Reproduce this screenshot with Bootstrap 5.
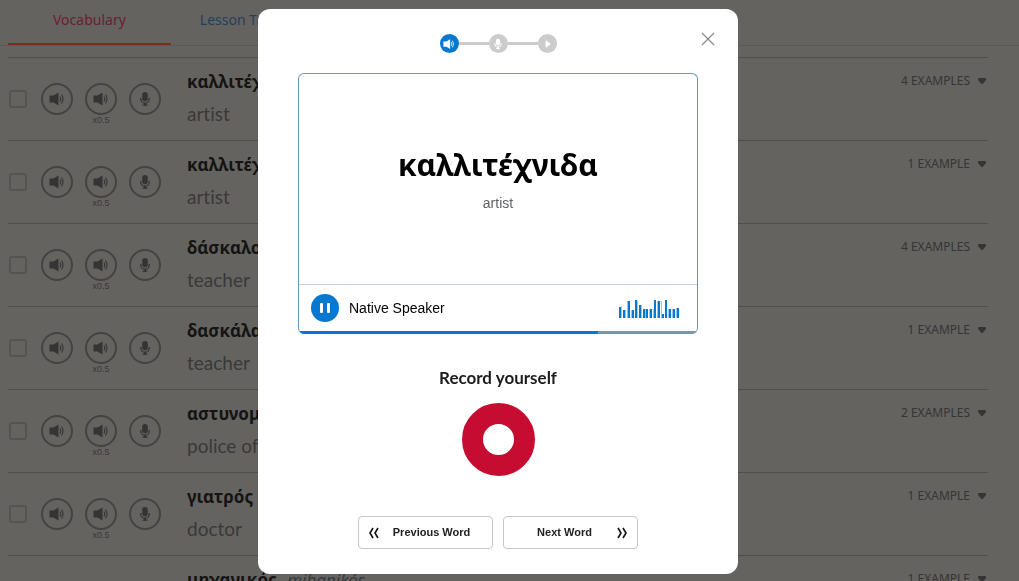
<!DOCTYPE html>
<html lang="en">
<head>
<meta charset="utf-8">
<meta name="viewport" content="width=device-width, initial-scale=1">
<title>Vocabulary</title>
<link href="https://cdn.jsdelivr.net/npm/bootstrap@5.3.0/dist/css/bootstrap.min.css" rel="stylesheet">
<style>
  body { background: #656360; font-family: "Lato", "Noto Sans", sans-serif; color: #3a3839; font-variant-ligatures: none; }
  .arial { font-family: "Liberation Sans", Arial, sans-serif; }

  /* lesson tabs */
  .lesson-tabs { height: 46px; border-bottom: 1px solid #5b5957; font: 14px/20px "Noto Sans", sans-serif; }
  .lesson-tabs .nav-link { height: 45px; padding: 10px 29px; color: #22405c; border-bottom: 2px solid transparent; border-radius: 0; }
  .lesson-tabs .nav-link.active { padding: 10px 45px; color: #6b1f2c; border-color: #7a2f1b; }

  /* word list */
  .word-list { margin: 11px 31px 0 8px; }
  .word-row { height: 83px; border-top: 1px solid #514f4d; }
  .pick { width: 18px; height: 18px; margin: 32px 14px 0 1px; appearance: none; border: 2px solid #565452; border-radius: 3px; background: none; }
  .tools { gap: 12px; margin: 25px 26px 0 0; }
  .tool { width: 32px; height: 32px; border: 2px solid #454342; border-radius: 50%; background: none; color: #353334; }
  .tool svg { width: 16px; height: 16px; }
  .slow { font-size: 9px; line-height: 10px; }
  .word { margin-top: 12px; font: 700 17px/24px "Noto Sans", sans-serif; color: #151414; white-space: nowrap; }
  .word i { margin-left: 6px; font-weight: 400; color: #35383d; }
  .gloss { margin-top: 8px; font-size: 19px; line-height: 24px; }
  .examples { margin-top: 15px; padding: 0 2px 0 0; gap: 8px; border: 0; background: none; color: #363435; font: 12px/16px "Noto Sans", sans-serif; }

  /* study dialog */
  .study { padding-right: 23px; }
  .study .modal-dialog { max-width: 480px; margin: 9px auto; }
  .study .modal-content { border: 0; border-radius: 12px; padding: 25px 40px; color: #000; }
  .step { width: 19px; height: 19px; border-radius: 50%; background: #ccc; color: #fff; }
  .step.current { background: #0678d0; }
  .step svg { width: 12px; height: 12px; }
  .link-line { width: 30px; height: 3px; background: #ccc; }
  .close-btn { position: absolute; top: 22px; right: 22px; padding: 0; border: 0; background: none; color: #8b8b8b; }
  .flash { margin-top: 20px; border: 1px solid #6f95b5; border-bottom: 0; border-radius: 6px; overflow: hidden; }
  .face { height: 210px; }
  .face h1 { margin: 0; font: 700 30px/40px "Noto Sans", sans-serif; }
  .face p { margin: 8px 0 0; font-size: 14px; line-height: 20px; color: #5f6265; }
  .player { height: 47px; padding: 0 18px 0 12px; gap: 10px; border-top: 1px solid #c5d2dc; font-size: 14px; }
  .pause { width: 28px; height: 28px; border: 0; padding: 0; border-radius: 50%; background: #0678d0; }
  .track { height: 3px; border-radius: 0; background: #7895ae; }
  .track .progress-bar { width: 75%; background: #0678d0; }
  .record-title { margin: 34px 0 15px; font-size: 17px; line-height: 20px; font-weight: 700; color: #1c1c1e; }
  .record { width: 73px; height: 73px; border: 21px solid #c60c30; border-radius: 50%; background: #fff; }
  .word-nav { gap: 10px; }
  .step-word { width: 135px; height: 33px; padding: 0 9px; border: 1px solid #c6c6c6; border-radius: 4px; background: #fff; color: #222; font-size: 11px; font-weight: 700; }
</style>
</head>
<body class="modal-open overflow-hidden">

<svg class="d-none">
  <symbol id="speaker" viewBox="0 0 16 16">
    <path fill="currentColor" d="M.5 4.500h4L9.500 1.500v13L4.500 11.500h-4z"/>
    <path fill="none" stroke="currentColor" stroke-width="1.100" d="M11 5.500q1.500 2.500 0 5M12.500 3.500q3 4.500 0 9"/>
  </symbol>
  <symbol id="mic" viewBox="0 0 16 16">
    <rect x="5.200" y="1" width="5.600" height="9.200" rx="2.800" fill="currentColor"/>
    <path fill="none" stroke="currentColor" stroke-width="1.300" d="M3.800 7v1.200a4.200 4 0 0 0 8.400 0V7M5.500 14.200h5"/>
    <path fill="none" stroke="currentColor" stroke-width="2" d="M8 12v2.500"/>
  </symbol>
  <symbol id="drop" viewBox="0 0 8 6">
    <path fill="currentColor" d="M1 0h6q1 0 1 1v1L5 5.500q-1 1-2 0L0 2V1q0-1 1-1z"/>
  </symbol>
</svg>

<nav class="nav lesson-tabs ps-2">
  <a class="nav-link active" href="#vocabulary">Vocabulary</a>
  <a class="nav-link" href="#transcript">Lesson Transcript</a>
</nav>

<main class="word-list" id="vocabulary">
  <div class="word-row d-flex align-items-start">
    <input class="pick" type="checkbox" aria-label="Select καλλιτέχνης">
    <div class="tools d-flex">
      <button class="tool d-flex align-items-center justify-content-center p-0" aria-label="Listen"><svg><use href="#speaker"/></svg></button>
      <div class="text-center"><button class="tool d-flex align-items-center justify-content-center p-0" aria-label="Listen slowly"><svg><use href="#speaker"/></svg></button><div class="slow arial">x0.5</div></div>
      <button class="tool d-flex align-items-center justify-content-center p-0" aria-label="Record"><svg><use href="#mic"/></svg></button>
    </div>
    <div class="flex-grow-1"><div class="word">καλλιτέχνης</div><div class="gloss">artist</div></div>
    <button class="examples d-flex align-items-center">4 EXAMPLES <svg width="8" height="6"><use href="#drop"/></svg></button>
  </div>
  <div class="word-row d-flex align-items-start">
    <input class="pick" type="checkbox" aria-label="Select καλλιτέχνιδα">
    <div class="tools d-flex">
      <button class="tool d-flex align-items-center justify-content-center p-0" aria-label="Listen"><svg><use href="#speaker"/></svg></button>
      <div class="text-center"><button class="tool d-flex align-items-center justify-content-center p-0" aria-label="Listen slowly"><svg><use href="#speaker"/></svg></button><div class="slow arial">x0.5</div></div>
      <button class="tool d-flex align-items-center justify-content-center p-0" aria-label="Record"><svg><use href="#mic"/></svg></button>
    </div>
    <div class="flex-grow-1"><div class="word">καλλιτέχνιδα</div><div class="gloss">artist</div></div>
    <button class="examples d-flex align-items-center">1 EXAMPLE <svg width="8" height="6"><use href="#drop"/></svg></button>
  </div>
  <div class="word-row d-flex align-items-start">
    <input class="pick" type="checkbox" aria-label="Select δάσκαλος">
    <div class="tools d-flex">
      <button class="tool d-flex align-items-center justify-content-center p-0" aria-label="Listen"><svg><use href="#speaker"/></svg></button>
      <div class="text-center"><button class="tool d-flex align-items-center justify-content-center p-0" aria-label="Listen slowly"><svg><use href="#speaker"/></svg></button><div class="slow arial">x0.5</div></div>
      <button class="tool d-flex align-items-center justify-content-center p-0" aria-label="Record"><svg><use href="#mic"/></svg></button>
    </div>
    <div class="flex-grow-1"><div class="word">δάσκαλος</div><div class="gloss">teacher</div></div>
    <button class="examples d-flex align-items-center">4 EXAMPLES <svg width="8" height="6"><use href="#drop"/></svg></button>
  </div>
  <div class="word-row d-flex align-items-start">
    <input class="pick" type="checkbox" aria-label="Select δασκάλα">
    <div class="tools d-flex">
      <button class="tool d-flex align-items-center justify-content-center p-0" aria-label="Listen"><svg><use href="#speaker"/></svg></button>
      <div class="text-center"><button class="tool d-flex align-items-center justify-content-center p-0" aria-label="Listen slowly"><svg><use href="#speaker"/></svg></button><div class="slow arial">x0.5</div></div>
      <button class="tool d-flex align-items-center justify-content-center p-0" aria-label="Record"><svg><use href="#mic"/></svg></button>
    </div>
    <div class="flex-grow-1"><div class="word">δασκάλα</div><div class="gloss">teacher</div></div>
    <button class="examples d-flex align-items-center">1 EXAMPLE <svg width="8" height="6"><use href="#drop"/></svg></button>
  </div>
  <div class="word-row d-flex align-items-start">
    <input class="pick" type="checkbox" aria-label="Select αστυνομικός">
    <div class="tools d-flex">
      <button class="tool d-flex align-items-center justify-content-center p-0" aria-label="Listen"><svg><use href="#speaker"/></svg></button>
      <div class="text-center"><button class="tool d-flex align-items-center justify-content-center p-0" aria-label="Listen slowly"><svg><use href="#speaker"/></svg></button><div class="slow arial">x0.5</div></div>
      <button class="tool d-flex align-items-center justify-content-center p-0" aria-label="Record"><svg><use href="#mic"/></svg></button>
    </div>
    <div class="flex-grow-1"><div class="word">αστυνομικός</div><div class="gloss">police officer</div></div>
    <button class="examples d-flex align-items-center">2 EXAMPLES <svg width="8" height="6"><use href="#drop"/></svg></button>
  </div>
  <div class="word-row d-flex align-items-start">
    <input class="pick" type="checkbox" aria-label="Select γιατρός">
    <div class="tools d-flex">
      <button class="tool d-flex align-items-center justify-content-center p-0" aria-label="Listen"><svg><use href="#speaker"/></svg></button>
      <div class="text-center"><button class="tool d-flex align-items-center justify-content-center p-0" aria-label="Listen slowly"><svg><use href="#speaker"/></svg></button><div class="slow arial">x0.5</div></div>
      <button class="tool d-flex align-items-center justify-content-center p-0" aria-label="Record"><svg><use href="#mic"/></svg></button>
    </div>
    <div class="flex-grow-1"><div class="word">γιατρός</div><div class="gloss">doctor</div></div>
    <button class="examples d-flex align-items-center">1 EXAMPLE <svg width="8" height="6"><use href="#drop"/></svg></button>
  </div>
  <div class="word-row d-flex align-items-start">
    <input class="pick" type="checkbox" aria-label="Select μηχανικός">
    <div class="tools d-flex">
      <button class="tool d-flex align-items-center justify-content-center p-0" aria-label="Listen"><svg><use href="#speaker"/></svg></button>
      <div class="text-center"><button class="tool d-flex align-items-center justify-content-center p-0" aria-label="Listen slowly"><svg><use href="#speaker"/></svg></button></div>
      <button class="tool d-flex align-items-center justify-content-center p-0" aria-label="Record"><svg><use href="#mic"/></svg></button>
    </div>
    <div class="flex-grow-1"><div class="word">μηχανικός <i>mihanikós</i></div></div>
    <button class="examples d-flex align-items-center">1 EXAMPLE <svg width="8" height="6"><use href="#drop"/></svg></button>
  </div>
</main>

<div class="modal study d-block" role="dialog" aria-modal="true" aria-label="Pronunciation practice">
  <div class="modal-dialog">
    <div class="modal-content">
      <button class="close-btn d-flex" aria-label="Close"><svg width="16" height="16" viewBox="0 0 16 16"><path d="M2 2l12 12M14 2L2 14" stroke="currentColor" stroke-width="1.300"/></svg></button>

      <div class="d-flex align-items-center justify-content-center">
        <span class="step current d-flex align-items-center justify-content-center"><svg><use href="#speaker"/></svg></span>
        <span class="link-line"></span>
        <span class="step d-flex align-items-center justify-content-center"><svg><use href="#mic"/></svg></span>
        <span class="link-line"></span>
        <span class="step d-flex align-items-center justify-content-center"><svg viewBox="0 0 13 13"><path fill="currentColor" d="M5 3.500q0-1 1-.5l4 3q.600.500 0 1l-4 3q-1 .500-1-.500z"/></svg></span>
      </div>

      <section class="flash">
        <div class="face d-flex flex-column justify-content-center text-center">
          <h1>καλλιτέχνιδα</h1>
          <p class="arial">artist</p>
        </div>
        <div class="player arial d-flex align-items-center">
          <button class="pause d-flex align-items-center justify-content-center" aria-label="Pause"><svg width="10" height="10"><path fill="#fff" d="M0 1q0-1 1-1h1q1 0 1 1v8q0 1-1 1H1q-1 0-1-1zM7 1q0-1 1-1h1q1 0 1 1v8q0 1-1 1H8q-1 0-1-1z"/></svg></button>
          <span class="me-auto">Native Speaker</span>
          <svg width="60" height="20" viewBox="0 -2 60 20" aria-hidden="true">
            <path stroke="#9bc6e9" stroke-width="1" d="M2.500 18V6M6.500 18v-8M8.500 18V1M12.500 18v-8M18.500 18V1M22.500 18V5M26.500 18V9M30.500 18V9M34.500 18V9M38.500 18V1M42.500 18V1M49.500 18V9M53.500 18V9M57.500 18V8"/>
            <path stroke="#0678d0" stroke-width="2" d="M1 18V7M5 18v-8M10 18V1M14 18v-8M17 18V0M21 18V5M25 18V9M28 18V9M32 18V9M36 18V0M40 18V1M44 18v-4M47 18V0M51 18V9M55 18V9M59 18V8"/>
          </svg>
        </div>
        <div class="progress track" role="progressbar" aria-label="Playback" aria-valuenow="75" aria-valuemin="0" aria-valuemax="100"><div class="progress-bar"></div></div>
      </section>

      <h2 class="record-title text-center">Record yourself</h2>
      <button class="record d-block mx-auto p-0" aria-label="Record"></button>

      <div class="word-nav d-flex justify-content-center mt-4 pt-3">
        <button class="step-word arial d-flex align-items-center">
          <svg width="12" height="12" fill="none" stroke="#111" stroke-width="1.600"><path d="M5 1L2 6l3 5M10 1L7 6l3 5"/></svg>
          <span class="flex-grow-1 text-center">Previous Word</span>
        </button>
        <button class="step-word arial d-flex align-items-center">
          <span class="flex-grow-1 text-center">Next Word</span>
          <svg width="12" height="12" fill="none" stroke="#111" stroke-width="1.600"><path d="M2 1l3 5-3 5M7 1l3 5-3 5"/></svg>
        </button>
      </div>
    </div>
  </div>
</div>

<script src="https://cdn.jsdelivr.net/npm/bootstrap@5.3.0/dist/js/bootstrap.bundle.min.js"></script>
</body>
</html>
